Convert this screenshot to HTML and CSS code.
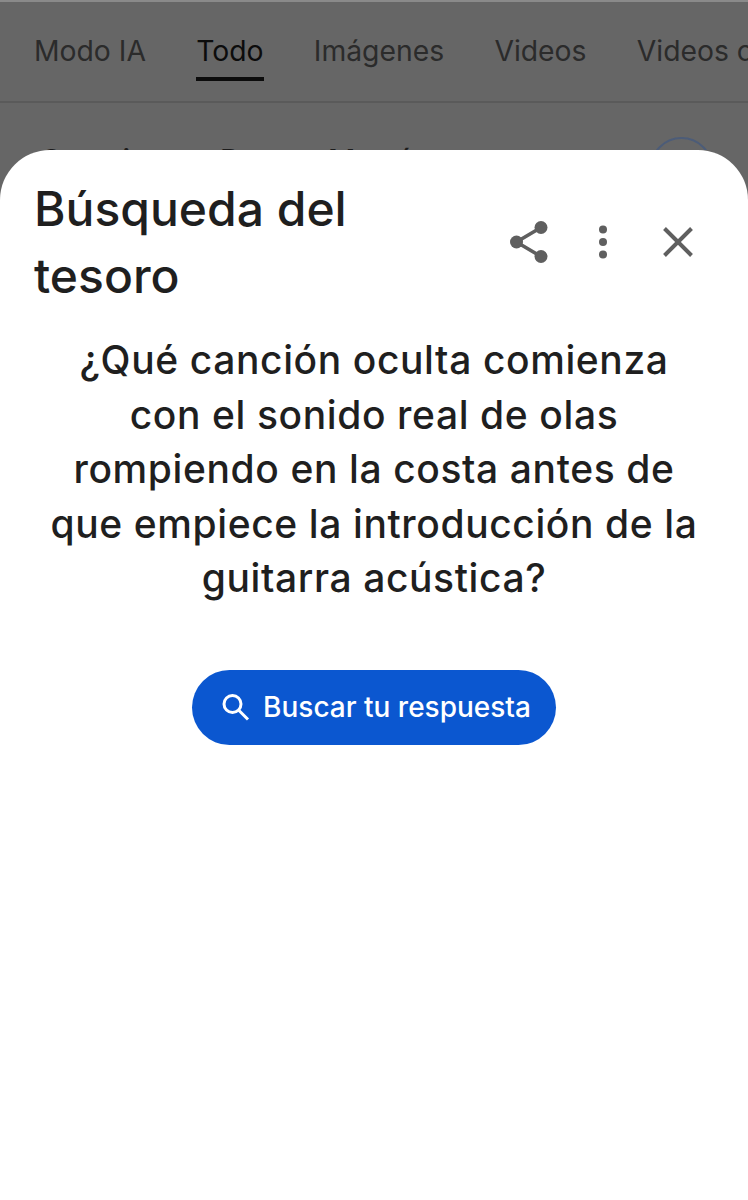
FILE: index.html
```html
<!DOCTYPE html>
<html lang="es">
<head>
  <meta charset="utf-8">
  <title>Búsqueda del tesoro</title>
  <link rel="stylesheet" href="styles.css">
</head>
<body>
  <div class="page">
    <nav class="tabs">
      <span class="tab">Modo IA</span>
      <span class="tab active">Todo</span>
      <span class="tab">Imágenes</span>
      <span class="tab">Videos</span>
      <span class="tab">Videos cortos</span>
    </nav>
    <div class="result">
      <span class="result-title">Canciones Papas Maná</span>
      <span class="result-circle"></span>
    </div>

    <section class="sheet">
      <header class="sheet-head">
        <h1 class="sheet-title">Búsqueda del tesoro</h1>
        <div class="sheet-actions">
          <span class="icon-btn">
            <svg width="38" height="42" viewBox="0 0 38 42">
              <path d="M31 6.500 L6.500 21 L31 35.500" fill="none" stroke="#5f5f5f" stroke-width="3.6"/>
              <circle cx="31" cy="6.500" r="6.500" fill="#5f5f5f"/>
              <circle cx="6.500" cy="21" r="6.500" fill="#5f5f5f"/>
              <circle cx="31" cy="35.500" r="6.500" fill="#5f5f5f"/>
            </svg>
          </span>
          <span class="icon-btn">
            <svg width="10" height="34" viewBox="0 0 10 34">
              <circle cx="5" cy="4.500" r="4" fill="#5f5f5f"/>
              <circle cx="5" cy="17" r="4" fill="#5f5f5f"/>
              <circle cx="5" cy="29.500" r="4" fill="#5f5f5f"/>
            </svg>
          </span>
          <span class="icon-btn">
            <svg width="30" height="30" viewBox="0 0 30 30">
              <path d="M1.500 1.500 L28.500 28.500 M28.500 1.500 L1.500 28.500" fill="none" stroke="#5f5f5f" stroke-width="4"/>
            </svg>
          </span>
        </div>
      </header>

      <p class="question">¿Qué canción oculta comienza<br>con el sonido real de olas<br>rompiendo en la costa antes de<br>que empiece la introducción de la<br>guitarra acústica?</p>

      <div class="action">
        <button class="search-btn">
          <svg width="30" height="30" viewBox="0 0 30 30">
            <circle cx="12.500" cy="12" r="8.500" fill="none" stroke="#fff" stroke-width="3"/>
            <path d="M18.500 18 L28 27.500" fill="none" stroke="#fff" stroke-width="3"/>
          </svg>
          Buscar tu respuesta
        </button>
      </div>
    </section>
  </div>
</body>
</html>
```

FILE: styles.css
```css
* {
  box-sizing: border-box;
}

body {
  margin: 0;
  background-color: #fff;
  font-family: "Inter", "Noto Sans", sans-serif;
}

.page {
  height: 1200px;
  overflow: hidden;
  background-color: #666;
  border-top: 2px solid #8a8a8a;
}

/* tabs behind the sheet */
.tabs {
  display: flex;
  gap: 50.300px;
  height: 101px;
  padding: 31px 0 0 34px;
  overflow: hidden;
  white-space: nowrap;
  border-bottom: 2px solid #5a5a5a;
}

.tab {
  height: 48px;
  font-size: 28.300px;
  line-height: 36px;
  color: #2b2b2b;
}

.tab.active {
  color: #0c0c0c;
  border-bottom: 4px solid #0c0c0c;
}

.result {
  display: flex;
  justify-content: space-between;
  align-items: flex-start;
  height: 47px;
  padding: 34px 35px 0 40px;
  overflow: hidden;
}

.result-title {
  margin-top: 5px;
  font-size: 30px;
  line-height: 36px;
  letter-spacing: 2px;
  font-weight: 500;
  color: #1c1c1c;
}

.result-circle {
  width: 63px;
  height: 63px;
  border: 2px solid #4c5c78;
  border-radius: 50%;
}

/* white sheet */
.sheet {
  height: 1050px;
  background-color: #fff;
  border-radius: 50px 50px 0 0;
  padding-top: 25px;
}

.sheet-head {
  display: flex;
  justify-content: space-between;
  align-items: center;
  padding: 0 33px 0 34px;
}

.sheet-title {
  width: 400px;
  margin: 0;
  font-size: 48px;
  line-height: 67px;
  font-weight: 500;
  color: #1f1f1f;
}

.sheet-actions {
  display: flex;
  align-items: center;
}

.icon-btn {
  display: flex;
  justify-content: center;
  align-items: center;
  width: 74.500px;
  height: 44px;
}

.question {
  margin: 24px 0 0;
  font-size: 39px;
  line-height: 54.500px;
  font-weight: 500;
  letter-spacing: 0.6px;
  text-align: center;
  color: #1f1f1f;
}

.action {
  display: flex;
  justify-content: center;
  margin-top: 64px;
}

.search-btn {
  display: flex;
  align-items: center;
  gap: 13px;
  height: 75px;
  padding: 0 25px 0 28px;
  border: none;
  border-radius: 38px;
  background-color: #0b57d0;
  color: #fff;
  font-family: inherit;
  font-size: 28px;
  font-weight: 500;
}
```
